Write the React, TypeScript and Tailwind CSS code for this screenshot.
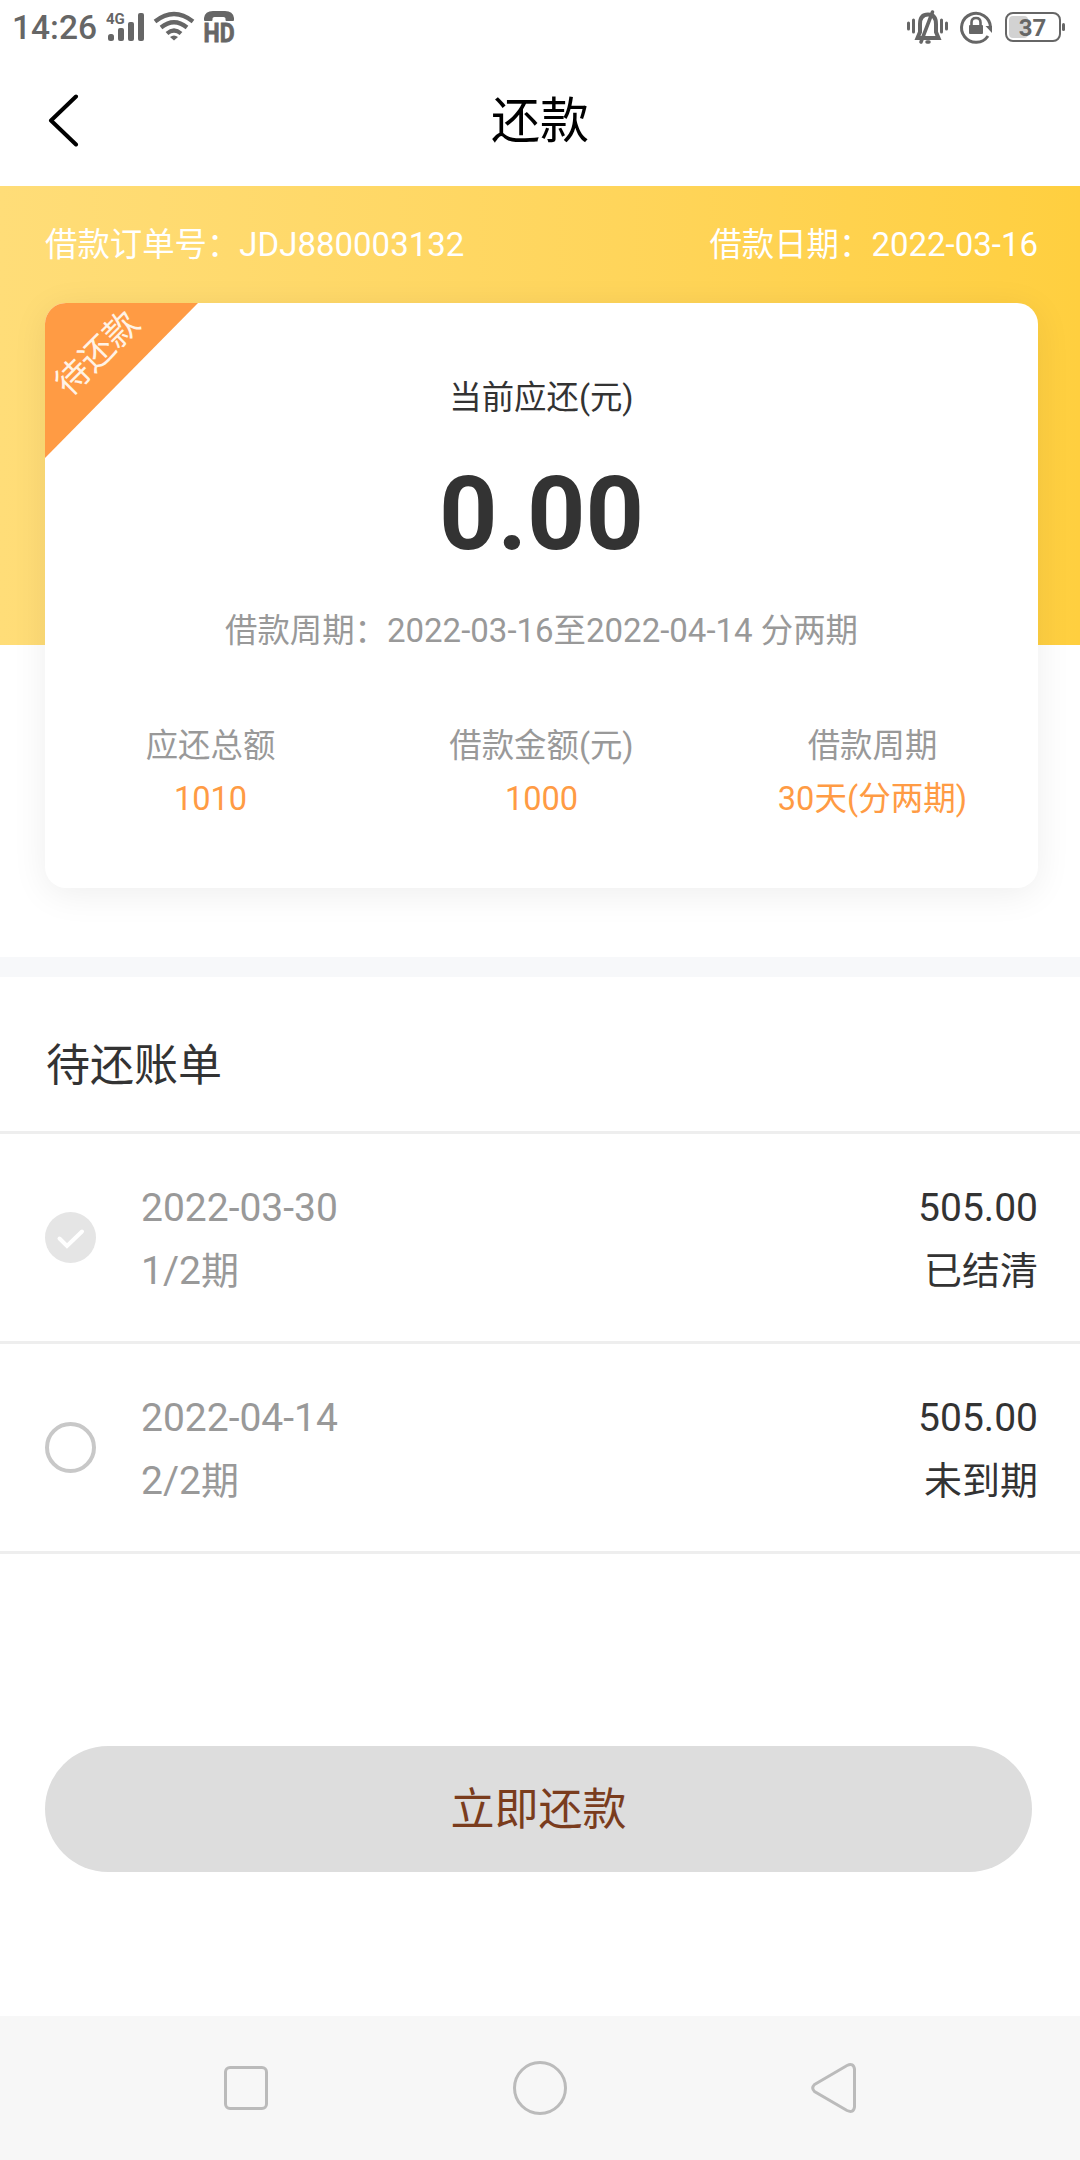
interface SummaryType {
  label: string;
  value: string;
}

interface BillType {
  date: string;
  term: string;
  amount: string;
  status: string;
  settled: boolean;
}

const summary: SummaryType[] = [
  { label: "应还总额", value: "1010" },
  { label: "借款金额(元)", value: "1000" },
  { label: "借款周期", value: "30天(分两期)" },
];

const bills: BillType[] = [
  {
    date: "2022-03-30",
    term: "1/2",
    amount: "505.00",
    status: "已结清",
    settled: true,
  },
  {
    date: "2022-04-14",
    term: "2/2",
    amount: "505.00",
    status: "未到期",
    settled: false,
  },
];

const StatusBar = () => {
  return (
    <div className="flex h-[54px] items-center justify-between pr-[14px] pl-[12px] text-[#666]">
      <div className="flex items-center">
        <span className="w-[94px] pt-[1px] text-[33.5px] leading-[40px] font-medium">
          14:26
        </span>
        {/* signal, wifi, HD call */}
        <svg width="140" height="54" viewBox="106 0 140 54" fill="currentColor">
          <text x="106" y="24" fontSize="15" fontWeight="700">
            4G
          </text>
          <rect x="108" y="34" width="6" height="7" rx="2.5" />
          <rect x="118" y="28" width="6" height="13" rx="2" />
          <rect x="128" y="22" width="6" height="19" rx="2" />
          <rect x="138" y="13" width="6" height="28" rx="2" />
          <g fill="none" stroke="currentColor" strokeWidth="4.2">
            <path d="M155 21.500Q174 6.500 193 21.500" />
            <path d="M161 27.500Q174 17 187 27.500" />
            <path d="M167 33.500Q174 27.500 181 33.500" />
          </g>
          <path d="M170 37Q174 33.800 178 37L174 40.500Z" />
          <path d="M204 20V18Q205 11 213 11H225Q233 11 234 18V20Q234 21 233 21H226.500Q225.500 21 225.500 20V18.500Q225.500 17 223.500 17H214.500Q212.500 17 212.500 18.500V20Q212.500 21 211.500 21H205Q204 21 204 20Z" />
          <text
            x="203.500"
            y="41.500"
            fontSize="25"
            fontWeight="700"
            textLength="31"
            lengthAdjust="spacingAndGlyphs"
            stroke="currentColor"
            strokeWidth="0.8"
          >
            HD
          </text>
        </svg>
      </div>
      {/* muted bell, rotation lock, battery */}
      <svg width="160" height="54" viewBox="906 0 160 54" fill="none">
        <g stroke="currentColor" strokeLinecap="round" strokeWidth="3">
          <path d="M908.500 23V29M913.500 20V32M941.500 20V32M946.500 23V29" />
          <path
            d="M917.500 38H938.500L936 32V24Q936 14.500 928 14.500Q920 14.500 920 24V32Z"
            strokeWidth="4"
          />
          <path d="M932.500 12L921 42M927 42H929" strokeWidth="3.500" />
        </g>
        <path
          d="M988 36A14.500 14.500 0 1 1 990.500 27"
          stroke="currentColor"
          strokeWidth="3"
        />
        <path d="M985.500 26H992V33Z" fill="currentColor" />
        <rect x="969" y="25" width="14" height="9" rx="1" fill="currentColor" />
        <path
          d="M971.500 26V22.500Q971.500 18 976 18Q980.500 18 980.500 22.500V26"
          stroke="currentColor"
          strokeWidth="2.600"
        />
        <rect x="1009" y="16" width="19" height="22" rx="4" fill="#d2d2d2" />
        <rect
          x="1006"
          y="13"
          width="54"
          height="28"
          rx="7"
          stroke="currentColor"
          strokeWidth="2"
        />
        <rect x="1062" y="23" width="3" height="8" rx="1.500" fill="currentColor" />
        <text
          x="1032.500"
          y="36"
          fontSize="24"
          fontWeight="700"
          textAnchor="middle"
          fill="currentColor"
        >
          37
        </text>
      </svg>
    </div>
  );
};

const Header = () => {
  return (
    <div className="grid h-[132px] grid-cols-3 items-center px-[45px]">
      <svg width="36" height="54" viewBox="0 0 36 54" fill="none">
        <path
          d="M31 3.500L6 27.500L31 51.500"
          stroke="black"
          strokeWidth="4"
          strokeLinecap="round"
          strokeLinejoin="round"
        />
      </svg>
      <h1 className="pt-[4px] text-center text-[49px] leading-[64px] text-black">
        还款
      </h1>
    </div>
  );
};

const LoanCard = () => {
  return (
    <div className="relative mt-[34px] h-[585px] w-[993px] overflow-hidden rounded-[21px] bg-white pt-[72px] text-center shadow-[0_6px_36px_rgba(0,0,0,0.07)]">
      <svg
        className="absolute top-0 left-0"
        width="153"
        height="155"
        viewBox="0 0 153 155"
      >
        <path d="M0 0H153L0 155Z" fill="#ff9b44" />
      </svg>
      <span className="absolute top-[27px] left-[-8px] w-[120px] -rotate-45 text-[34px] leading-[46px] text-[#fff3e6]">
        待还款
      </span>
      <p className="leading-[46px] text-[#333]">当前应还(元)</p>
      <p className="mt-[33px] text-[102px] leading-[120px] font-bold text-[#333]">
        0.00
      </p>
      <p className="mt-[34px] leading-[46px] text-[#999]">
        借款周期：
        <span className="text-[33px]">2022-03-16</span>至
        <span className="text-[33px]">2022-04-14 </span>
        分两期
      </p>
      <div className="mt-[69px] grid grid-cols-3">
        {summary.map((item) => (
          <div key={item.label} className="leading-[46px]">
            <p className="text-[#999]">{item.label}</p>
            <p className="mt-[7px] text-[32.6px] text-[#ff9b44]">
              {item.value}
            </p>
          </div>
        ))}
      </div>
    </div>
  );
};

const BillRow: React.FC<{ bill: BillType }> = ({ bill }) => {
  return (
    <li className="flex h-[210px] items-center border-b-3 border-[#eee] pr-[42px] pl-[45px] text-[39px] leading-[63px]">
      {bill.settled ? (
        <svg width="51" height="51" viewBox="0 0 51 51" fill="none">
          <circle cx="25.500" cy="25.500" r="25.500" fill="#e5e5e5" />
          <path
            d="M14.500 26.500L22 34L37 19.500"
            stroke="white"
            strokeWidth="4"
            strokeLinecap="round"
          />
        </svg>
      ) : (
        <div className="size-[51px] rounded-full border-4 border-[#c8c8c8]" />
      )}
      <div className="ml-[45px] pt-[5px] text-[#999]">
        <p>{bill.date}</p>
        <p>
          {bill.term}
          <span className="text-[38px]">期</span>
        </p>
      </div>
      <div className="ml-auto pt-[5px] text-right text-[#333]">
        <p>{bill.amount}</p>
        <p className="text-[38px]">{bill.status}</p>
      </div>
    </li>
  );
};

const NavBar = () => {
  return (
    <div className="mt-auto flex h-[144px] items-center bg-[#f7f7f7] pl-[224px]">
      <div className="size-[44px] rounded-[6px] border-3 border-[#bbb]" />
      <div className="ml-[245px] size-[54px] rounded-full border-3 border-[#bbb]" />
      <svg
        className="ml-[243px]"
        width="48"
        height="54"
        viewBox="0 0 48 54"
        fill="none"
      >
        <path
          d="M4.500 23.500L37 4.500Q43.500 1.500 44.500 8V46Q43.500 52.500 37 49.500L4.500 30.500Q1 27 4.500 23.500Z"
          stroke="#bbb"
          strokeWidth="3"
        />
      </svg>
    </div>
  );
};

const App = () => {
  return (
    <div className="flex h-[2160px] w-[1080px] flex-col bg-white font-[Roboto,'Noto_Sans_CJK_SC',sans-serif] text-[32.4px]">
      <StatusBar />
      <Header />
      {/* the card hangs out below the yellow banner */}
      <div className="h-[771px] shrink-0">
        <div className="h-[459px] bg-linear-to-r from-[#ffdd78] to-[#ffcf3f] pt-[35px] pr-[42px] pl-[45px]">
          <div className="flex justify-between leading-[47px] text-white">
            <p>
              借款订单号：<span className="text-[33px]">JDJ880003132</span>
            </p>
            <p>
              借款日期：<span className="text-[33px]">2022-03-16</span>
            </p>
          </div>
          <LoanCard />
        </div>
      </div>
      <div className="h-[20px] shrink-0 bg-[#f7f8fa]" />
      <h2 className="h-[157px] shrink-0 border-b-3 border-[#eee] pt-[57px] pl-[46px] text-[44px] leading-[64px] text-[#333]">
        待还账单
      </h2>
      <ul>
        {bills.map((bill) => (
          <BillRow key={bill.date} bill={bill} />
        ))}
      </ul>
      <button className="mt-[192px] ml-[45px] h-[126px] w-[987px] shrink-0 rounded-full bg-[#ddd] pt-[2px] text-[44px] text-[#7a3c1d]">
        立即还款
      </button>
      <NavBar />
    </div>
  );
};

export default App;
